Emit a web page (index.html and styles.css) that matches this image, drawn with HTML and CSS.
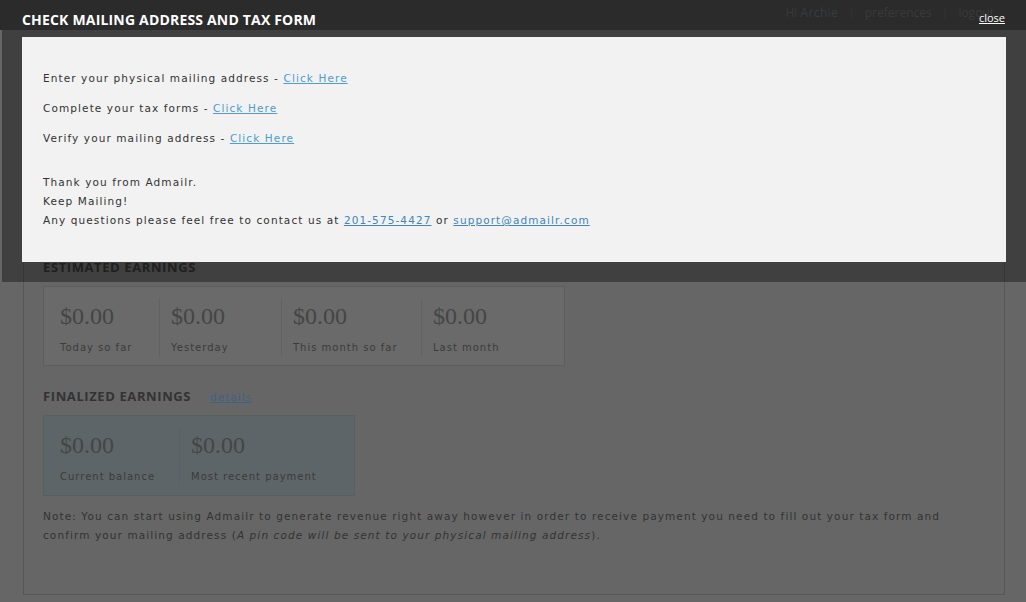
FILE: index.html
```html
<!DOCTYPE html>
<html lang="en">
<head>
<meta charset="utf-8">
<title>Admailr - Dashboard</title>
<link rel="stylesheet" href="styles.css">
</head>
<body>
<div class="page">
  <header class="topbar">
    <nav class="usernav">
      <span class="hi">Hi <b class="user">Archie</b></span>
      <span class="sep">|</span>
      <a class="navlink">preferences</a>
      <span class="sep">|</span>
      <a class="navlink">logout</a>
    </nav>
  </header>
  <main class="content">
    <h2 class="section-title">Estimated Earnings</h2>
    <div class="stats stats-est">
      <div class="stat"><div class="value">$0.00</div><div class="label">Today so far</div></div>
      <div class="stat"><div class="value">$0.00</div><div class="label">Yesterday</div></div>
      <div class="stat"><div class="value">$0.00</div><div class="label">This month so far</div></div>
      <div class="stat"><div class="value">$0.00</div><div class="label">Last month</div></div>
    </div>
    <h2 class="section-title">Finalized Earnings <a class="details">details</a></h2>
    <div class="stats stats-fin">
      <div class="stat"><div class="value">$0.00</div><div class="label">Current balance</div></div>
      <div class="stat"><div class="value">$0.00</div><div class="label">Most recent payment</div></div>
    </div>
    <p class="note">Note: You can start using Admailr to generate revenue right away however in order to receive payment you need to fill out your tax form and confirm your mailing address (<em>A pin code will be sent to your physical mailing address</em>).</p>
  </main>
</div>

<div class="modal">
  <div class="modal-head">
    <h1 class="modal-title">CHECK MAILING ADDRESS AND TAX FORM</h1>
    <a class="close">close</a>
  </div>
  <div class="modal-frame">
    <div class="modal-panel">
      <p class="step">Enter your physical mailing address - <a class="link">Click Here</a></p>
      <p class="step">Complete your tax forms - <a class="link">Click Here</a></p>
      <p class="step step-last">Verify your mailing address - <a class="link">Click Here</a></p>
      <p class="line">Thank you from Admailr.</p>
      <p class="line">Keep Mailing!</p>
      <p class="line">Any questions please feel free to contact us at <a class="link link-dark">201-575-4427</a> or <a class="link link-dark">support@admailr.com</a></p>
    </div>
  </div>
</div>
</body>
</html>
```

FILE: styles.css
```css
* { box-sizing: border-box; }

html, body {
  margin: 0;
  padding: 0;
}

body {
  background: #666666;
  font-family: "DejaVu Sans", "Liberation Sans", sans-serif;
  width: 1026px;
  height: 602px;
  overflow: hidden;
  position: relative;
}

.page {
  display: flex;
  flex-direction: column;
}

.topbar {
  height: 30px;
  background: #2b2b2b;
  display: flex;
  justify-content: flex-end;
  align-items: center;
  padding-right: 32px;
}

.usernav {
  display: flex;
  align-items: center;
  gap: 10px;
  font-family: "Open Sans", "Liberation Sans", sans-serif;
  font-size: 12px;
  color: #3a3a3a;
  margin-top: -6px;
}

.usernav .user {
  font-weight: normal;
  color: #363c41;
  letter-spacing: 0.4px;
}

.usernav .sep {
  color: #353535;
}

/* main content box */
.content {
  margin: 15px 21px 0 23px;
  border: 1px solid #575757;
  padding: 211px 19px 49px 19px;
}

.section-title {
  margin: 0;
  font-family: "Open Sans", "Liberation Sans", sans-serif;
  font-weight: bold;
  font-size: 13px;
  letter-spacing: 0.6px;
  line-height: 20px;
  height: 20px;
  text-transform: uppercase;
  color: #333333;
  display: flex;
  align-items: baseline;
  gap: 19px;
}

.details {
  font-family: "DejaVu Sans", sans-serif;
  font-weight: normal;
  font-size: 10.5px;
  letter-spacing: 1px;
  text-transform: none;
  color: #3d6384;
  text-decoration: underline;
}

.stats {
  display: grid;
  margin: 9px 0 20px 0;
  padding: 11px 0 8px 5px;
  border: 1px solid #5e5e5e;
}

.stats-est {
  width: 522px;
  background: #6a6a6a;
  grid-template-columns: 110px 122px 140px 1fr;
}

.stats-fin {
  width: 312px;
  background: #5e6568;
  border-color: #585f61;
  grid-template-columns: 130px 1fr;
  padding-bottom: 9px;
  margin-bottom: 11px;
}

.stat {
  padding: 4px 0 2px 11px;
}

.stat + .stat {
  border-left: 1px solid #626262;
}

.stats-fin .stat + .stat {
  border-left-color: #586062;
}

.value {
  font-family: "Liberation Serif", serif;
  font-size: 24px;
  line-height: 28px;
  color: #454545;
}

.label {
  margin-top: 11px;
  font-size: 10px;
  line-height: 14px;
  letter-spacing: 1px;
  color: #3b3b3b;
}

.note {
  margin: 0;
  padding-right: 30px;
  font-size: 10.5px;
  line-height: 19px;
  letter-spacing: 1.1px;
  color: #333333;
}

/* modal */
.modal {
  position: absolute;
  top: 0;
  left: 2px;
  right: 0;
}

.modal-head {
  height: 30px;
  display: flex;
  justify-content: space-between;
  align-items: center;
  padding: 0 21px 0 20px;
}

.modal-title {
  margin: 0;
  font-family: "Open Sans", "Liberation Sans", sans-serif;
  font-weight: bold;
  font-size: 14px;
  letter-spacing: 0.18px;
  line-height: 20px;
  color: #ffffff;
  margin-top: 9px;
}

.close {
  font-family: "Open Sans", "Liberation Sans", sans-serif;
  font-size: 11px;
  color: #ffffff;
  text-decoration: underline;
  margin-top: 5px;
}

.modal-frame {
  background: rgba(0, 0, 0, 0.37);
  padding: 7px 20px 20px 20px;
}

.modal-panel {
  background: #f2f2f2;
  height: 225px;
  padding: 32px 21px 0 21px;
  font-size: 10.5px;
  line-height: 19px;
  letter-spacing: 1.1px;
  color: #333333;
}

.modal-panel p {
  margin: 0;
}

.modal-panel .step {
  margin-bottom: 11px;
}

.modal-panel .step-last {
  margin-bottom: 25px;
}

.link {
  color: #4e9bd5;
  text-decoration: underline;
}

.link-dark {
  color: #3f86bf;
}
```
